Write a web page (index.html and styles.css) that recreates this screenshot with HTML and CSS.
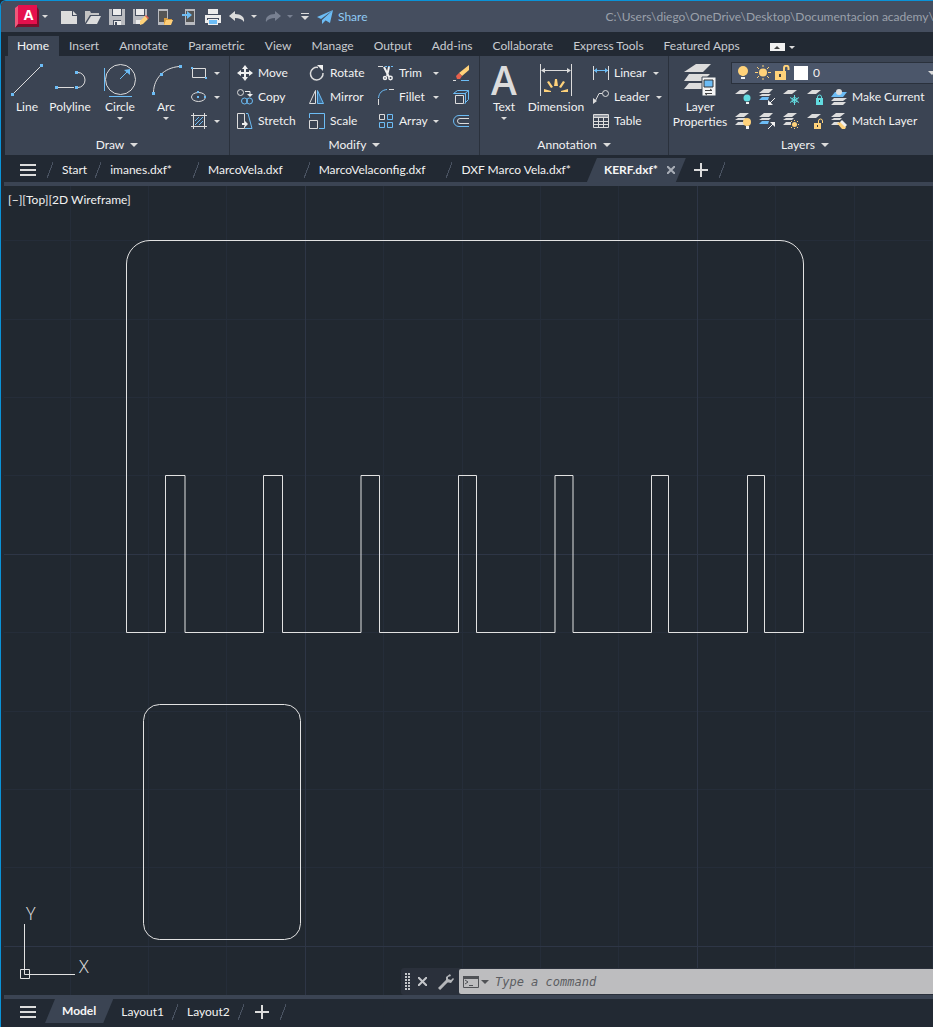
FILE: index.html
```html
<!DOCTYPE html>
<html lang="en">
<head>
    <meta charset="UTF-8">
    <meta name="viewport" content="width=device-width, initial-scale=1.0">
    <title>KERF.dxf</title>
    <link rel="stylesheet" href="styles.css">
</head>
<body>
    <div class="app">
        <header class="titlebar">
            <button class="logo" aria-label="Application menu">
                <svg width="24" height="24" viewBox="0 0 24 24"><path d="M4 2h18l2 3v17H7z" fill="#7d0d2b"/><path d="M0 3l4-3v19l-4 4z" fill="#f0587a"/><path d="M3 0h19v19H3z" fill="#e5104d"/><path d="M0 23l3-4h19v3H3z" fill="#7d0d2b"/></svg>
                <span>A</span>
            </button>
            <i class="caret"></i>
            <nav class="quick">
                <button aria-label="New"><svg width="16" height="16"><path d="M0 2h11v5h5v8H0z" fill="#dcdcdc"/><path d="M12 2l4 4h-4z" fill="#dcdcdc"/></svg></button>
                <button aria-label="Open"><svg width="16" height="16"><path d="M0 14V2h5l1 2h8v2H5z" fill="#c4c4c4"/><path d="M6 7h10l-4 8H1z" fill="#dcdcdc"/></svg></button>
                <button aria-label="Save"><svg width="16" height="16"><path d="M0 0h16v16H0z" fill="#b9bbc0"/><path d="M3 0h10v7H3zM4 11h8v5H4z" fill="#454e5f"/><path d="M4 0h8v6H4zM5 12h7v4H5z" fill="#ececec"/><path d="M6 13h2v3H6z" fill="#454e5f"/></svg></button>
                <button aria-label="Save as"><svg width="16" height="16"><path d="M0 0h14v9l-6 6H0z" fill="#b9bbc0"/><path d="M2 0h10v7H2z" fill="#454e5f"/><path d="M3 0h8v6H3zM3 11h5v4H3z" fill="#ececec"/><path d="M7 12l5-5 3 3-5 5-3 1z" fill="#ffd27a"/><path d="M12 7l1-1 3 3-1 1z" fill="#e8604c"/></svg></button>
                <button aria-label="Open from mobile"><svg width="16" height="16"><path d="M1 0h10v16H1z" fill="#b9bbc0"/><path d="M2 2h8v11H2z" fill="#555"/><path d="M7 9h3l1 1h4v2l-2 4H7z" fill="#d99c3c"/><path d="M9 11h7l-2 5H7z" fill="#ffcf78"/></svg></button>
                <button aria-label="Save to mobile"><svg width="16" height="16"><path d="M4 0h10v16H4z" fill="#b9bbc0"/><path d="M5 2h8v11H5z" fill="#555"/><path d="M1 5h5V2l5 4-5 4V7H1z" fill="#6cbcf5"/></svg></button>
                <button aria-label="Plot"><svg width="16" height="16"><path d="M3 0h10v5H3zM0 6h16v8H0z" fill="#ececec"/><path d="M2 9h12v2H2z" fill="#454e5f"/><path d="M3 10h10v6H3z" fill="#ececec"/><path d="M4 11h8v4H4z" fill="#6cbcf5"/></svg></button>
                <button aria-label="Undo"><svg width="16" height="16"><path d="M0 7l6-5v3c6 0 10 3 9 8-2-3-5-4-9-4v3z" fill="#dcdcdc"/></svg></button>
                <i class="caret"></i>
                <button aria-label="Redo"><svg width="16" height="16"><path d="M16 7l-6-5v3C4 5 0 8 1 13c2-3 5-4 9-4v3z" fill="#788091"/></svg></button>
                <i class="caret dim"></i>
                <button aria-label="Customize"><svg width="8" height="8"><path d="M0 0h8v1H0zM0 3h8l-4 4z" fill="#dcdcdc"/></svg></button>
            </nav>
            <a class="share" href="#">
                <svg width="16" height="16"><path d="M16 1L0 8l4 2zM16 1L5 11v4l3-3zM16 1L8 11l5 3z" fill="#6cbcf5"/></svg>
                Share
            </a>
            <span class="path">C:\Users\diego\OneDrive\Desktop\Documentacion academy\V</span>
        </header>

        <nav class="tabs">
            <button class="tab active">Home</button>
            <button class="tab">Insert</button>
            <button class="tab">Annotate</button>
            <button class="tab">Parametric</button>
            <button class="tab">View</button>
            <button class="tab">Manage</button>
            <button class="tab">Output</button>
            <button class="tab">Add-ins</button>
            <button class="tab">Collaborate</button>
            <button class="tab">Express Tools</button>
            <button class="tab">Featured Apps</button>
            <button class="minimize" aria-label="Minimize ribbon"><i class="caret-up"></i></button>
            <i class="caret"></i>
        </nav>

        <div class="ribbon">
            <!-- Draw -->
            <section class="panel draw">
                <div class="panel-body">
                    <button class="big line">
                        <svg width="34" height="34"><path d="M4 30L30 4" stroke="#dcdcdc" fill="none"/><path d="M1 30h3v3H1zM30 1h3v3h-3z" fill="#6cbcf5"/></svg>
                        Line
                    </button>
                    <button class="big polyline">
                        <svg width="34" height="34"><path d="M4 24.500h17M23 9.500h2a7 7.500 0 0 1 0 15h-1" stroke="#dcdcdc" fill="none"/><path d="M2 23h3v3H2zM22 23h3v3h-3zM22 8h3v3h-3z" fill="#6cbcf5"/></svg>
                        Polyline
                    </button>
                    <button class="big circle">
                        <svg width="34" height="34"><circle cx="17.500" cy="16.500" r="15" stroke="#dcdcdc" fill="none"/><path d="M1.500 5v23M6 33.500h23M17 16l8-8" stroke="#6cbcf5" fill="none"/><path d="M27 6v6l-6-5z" fill="#6cbcf5"/></svg>
                        Circle
                        <i class="caret"></i>
                    </button>
                    <button class="big arc">
                        <svg width="34" height="34"><path d="M4.500 29C5 15 15 5 30 3.500" stroke="#dcdcdc" fill="none"/><path d="M3 29h3v3H3zM11 10h3v3h-3zM30 2h3v3h-3z" fill="#6cbcf5"/></svg>
                        Arc
                        <i class="caret"></i>
                    </button>
                    <div class="small-list">
                        <button class="small" aria-label="Rectangle"><svg width="16" height="16"><path d="M1.500 3.500h13v9h-13z" stroke="#dcdcdc" fill="none"/><path d="M0 2h2v2H0zM14 12h2v2h-2z" fill="#6cbcf5"/></svg><i class="caret"></i></button>
                        <button class="small" aria-label="Ellipse"><svg width="16" height="16"><ellipse cx="7.500" cy="8" rx="7" ry="4.500" stroke="#dcdcdc" fill="none"/><path d="M6 7h2v2H6zM6 2h2v2H6zM13 7h2v2h-2z" fill="#6cbcf5"/></svg><i class="caret"></i></button>
                        <button class="small" aria-label="Hatch"><svg width="16" height="16"><path d="M2.500 0v16M13.500 0v16M0 2.500h16M0 13.500h16" stroke="#dcdcdc" fill="none"/><path d="M4 8l4-4M4 12l8-8M8 12l4-4" stroke="#6cbcf5" fill="none"/></svg><i class="caret"></i></button>
                    </div>
                </div>
                <button class="panel-title">Draw <i class="caret wide"></i></button>
            </section>

            <!-- Modify -->
            <section class="panel modify">
                <div class="panel-body">
                    <div class="small-list">
                        <button class="small"><svg width="16" height="16"><path d="M8 2v12M2 8h12" stroke="#f0f0f0" stroke-width="2"/><path d="M8 0l3 4H5zM8 16l3-4H5zM0 8l4-3v6zM16 8l-4-3v6z" fill="#f0f0f0"/></svg>Move</button>
                        <button class="small"><svg width="16" height="16"><g fill="none"><circle cx="3.500" cy="3.500" r="3" stroke="#dcdcdc"/><path d="M8 2.500h5v4" stroke="#f0f0f0"/><circle cx="7.500" cy="12" r="3" stroke="#6cbcf5"/><circle cx="12.500" cy="12" r="3" stroke="#6cbcf5"/></g><path d="M10 5h6l-3 3z" fill="#f0f0f0"/></svg>Copy</button>
                        <button class="small"><svg width="16" height="16"><path d="M7.500 10V.5h-7v15h7v-3" stroke="#dcdcdc" fill="none"/><path d="M9 .5h2l4 15H8" stroke="#6cbcf5" fill="none"/><path d="M5 10h3V8l3 3-3 3v-2H5z" fill="#f0f0f0"/></svg>Stretch</button>
                    </div>
                    <div class="small-list">
                        <button class="small"><svg width="16" height="16"><path d="M9 2.500A6.300 6.300 0 1 0 14 8" stroke="#dcdcdc" stroke-width="1.500" fill="none"/><path d="M8 0h6v6z" fill="#f0f0f0"/></svg>Rotate</button>
                        <button class="small"><svg width="16" height="16"><path d="M6.500 1.500v13h-6z" stroke="#dcdcdc" fill="none"/><path d="M8.500 1.500v13h6z" stroke="#6cbcf5" fill="#3d6d97"/></svg>Mirror</button>
                        <button class="small"><svg width="16" height="16"><path d="M.5 5V.5h15v15H10" stroke="#6cbcf5" fill="none"/><path d="M.5 7.500h8v8h-8z" stroke="#dcdcdc" fill="none"/></svg>Scale</button>
                    </div>
                    <div class="small-list carets">
                        <button class="small"><svg width="16" height="16"><path d="M0 1.500h5" stroke="#dcdcdc"/><path d="M7 1.500h9" stroke="#6cbcf5" stroke-dasharray="2 1"/><path d="M6 2l5 10M11 2l-2 9" stroke="#f0f0f0" stroke-width="2" fill="none"/><g stroke="#f0f0f0" stroke-width="1.500" fill="none"><circle cx="7" cy="13" r="1.500"/><circle cx="12.500" cy="13" r="1.700"/></g></svg>Trim<i class="caret"></i></button>
                        <button class="small"><svg width="16" height="16"><path d="M.5 16v-6" stroke="#dcdcdc"/><path d="M.5 9C1 4 4 1 9 .5" stroke="#6cbcf5" fill="none"/><path d="M11 .5h5" stroke="#dcdcdc"/></svg>Fillet<i class="caret"></i></button>
                        <button class="small"><svg width="16" height="16"><path d="M1.500 1.500h5v5h-5z" stroke="#dcdcdc" fill="none"/><path d="M9.500 1.500h5v5h-5zM1.500 9.500h5v5h-5zM9.500 9.500h5v5h-5z" stroke="#6cbcf5" fill="none"/></svg>Array<i class="caret"></i></button>
                    </div>
                    <div class="small-list">
                        <button class="small" aria-label="Erase"><svg width="16" height="16"><path d="M0 15.500h3" stroke="#dcdcdc"/><path d="M8 15.500h8" stroke="#6cbcf5"/><path d="M16 0v5l-7 6-3-3z" fill="#ffd27a"/><path d="M6 8l3 3-2 3H4l-1-3z" fill="#e8604c"/></svg></button>
                        <button class="small" aria-label="Explode"><svg width="16" height="16"><path d="M.5 4.500l4-3h11v9l-4 4M11.500 5l4-3.500M.5 4.500h12v10" stroke="#6cbcf5" fill="none"/><path d="M2.500 6.500h8v8h-8z" stroke="#dcdcdc" fill="none"/></svg></button>
                        <button class="small" aria-label="Offset"><svg width="16" height="16"><path d="M16 2.500H6a5.500 5.500 0 0 0 0 11h10" stroke="#6cbcf5" fill="none"/><path d="M16 5.500H7a2.500 2.500 0 0 0 0 5h9" stroke="#dcdcdc" fill="none"/></svg></button>
                    </div>
                </div>
                <button class="panel-title">Modify <i class="caret wide"></i></button>
            </section>

            <!-- Annotation -->
            <section class="panel annotation">
                <div class="panel-body">
                    <button class="big text"><span class="big-letter">A</span>Text<i class="caret"></i></button>
                    <button class="big dimension">
                        <svg width="34" height="34"><path d="M1.500 1v32M32.500 1v32M3 7.500h28" stroke="#dcdcdc"/><path d="M2 7.500L6 5v5zM32 7.500L28 5v5z" fill="#dcdcdc"/><path d="M16 16h2l1 7h-4zM8 19l2-1 4 6-2 1zM26 19l-2-1-4 6 2 1zM5 26l7 2v1H5zM29 26l-7 2v1h7z" fill="#ffd27a"/></svg>
                        Dimension
                    </button>
                    <div class="small-list">
                        <button class="small"><svg width="16" height="16"><path d="M.5 1v14M15.500 1v14" stroke="#dcdcdc"/><path d="M1 5.500h14" stroke="#6cbcf5"/><path d="M1 5.500L4 3v5zM15 5.500L12 3v5z" fill="#6cbcf5"/></svg>Linear<i class="caret"></i></button>
                        <button class="small"><svg width="16" height="16"><circle cx="12.500" cy="4.500" r="3" stroke="#dcdcdc" fill="none"/><path d="M9 4.500H6l-4 8" stroke="#dcdcdc" fill="none"/><path d="M0 15V9l4 3z" fill="#dcdcdc"/></svg>Leader<i class="caret"></i></button>
                        <button class="small"><svg width="16" height="16"><path d="M.5 1.500h15v13H.5zM0 4.500h16M0 8.500h16M0 11.500h16M5.500 4v10M10.500 4v10" stroke="#dcdcdc" fill="none"/><path d="M1 2h14v2H1z" fill="#9499a2"/></svg>Table</button>
                    </div>
                </div>
                <button class="panel-title">Annotation <i class="caret wide"></i></button>
            </section>

            <!-- Layers -->
            <section class="panel layers">
                <div class="panel-body">
                    <button class="big properties">
                        <svg width="34" height="34"><path d="M13 1h15l-8 8H1zM6 11h21l-7 7H1zM6 20h16v6H1z" fill="#dcdcdc"/><path d="M19 14h14v19H19z" fill="#f4f4f4" stroke="#3b4453"/><path d="M21 17h9v7h-9z" fill="#6cbcf5" stroke="#333"/><path d="M22 27.500h7M22 30.500h7M27 26l2 1.500M24 32l-2-1.500" stroke="#444"/></svg>
                        Layer<br>Properties
                    </button>
                    <div class="layer-tools">
                        <div class="combo">
                            <svg width="16" height="16"><circle cx="7" cy="6" r="5" fill="#ffd27a"/><path d="M5 9h4l-1 2H6z" fill="#ffd27a"/><path d="M5 12h4v2H5z" fill="#f4f4f4"/></svg>
                            <svg width="16" height="16"><circle cx="8" cy="7.500" r="4" fill="#ffd27a"/><path d="M8 0v2M8 13v2M0 7.500h3M13 7.500h3M2 2l2 2M14 2l-2 2M2 13l2-2M14 13l-2-2" stroke="#ffd27a"/></svg>
                            <svg width="16" height="16"><path d="M1 6h11v9H1z" fill="#ffd27a"/><path d="M10 6V3a2.200 2.200 0 0 1 4.500 0v2" stroke="#ffd27a" stroke-width="2" fill="none"/><path d="M5 9h2v3H5z" fill="#444"/></svg>
                            <span class="swatch"></span>
                            <select aria-label="Layer"><option>0</option></select>
                            <i class="caret wide"></i>
                        </div>
                        <div class="layer-row">
                            <button aria-label="Off"><svg width="16" height="16"><path d="M5 1h9l-5 4H0z" fill="#dcdcdc"/><circle cx="12" cy="9" r="3.500" fill="#62dbe0"/><path d="M11 13h3v2h-3z" fill="#f0f0f0"/></svg></button>
                            <button aria-label="Isolate"><svg width="16" height="16"><path d="M5 0h9l-4 4H0zM3 5h9l-2 2H0z" fill="#dcdcdc"/><path d="M3 8h7l-1 3H0z" fill="#6cbcf5"/><path d="M16 9l-5 5" stroke="#f0f0f0"/><path d="M9 16v-5l5 5z" fill="#f0f0f0"/></svg></button>
                            <button aria-label="Freeze"><svg width="16" height="16"><path d="M5 1h9l-5 4H0z" fill="#dcdcdc"/><g stroke="#62dbe0" fill="none"><circle cx="11.500" cy="11" r="2.500"/><path d="M11.500 6v10M7 8.500l9 5M16 8.500l-9 5"/></g></svg></button>
                            <button aria-label="Lock"><svg width="16" height="16"><path d="M5 1h9l-5 4H0z" fill="#dcdcdc"/><path d="M9 9h7v7H9z" fill="#62dbe0"/><path d="M10.500 9V8a2 2 0 0 1 4 0v1" stroke="#62dbe0" fill="none"/><path d="M12 11h1v2h-1z" fill="#333"/></svg></button>
                            <button class="wide-tool"><svg width="16" height="16"><path d="M4 3h12l-4 5H0z" fill="#6cbcf5"/><circle cx="8" cy="3" r="3" fill="#dcdcdc"/><path d="M3 9h13l-4 3H0zM3 13h12l-3 3H0z" fill="#dcdcdc"/></svg>Make Current</button>
                        </div>
                        <div class="layer-row">
                            <button aria-label="Turn on"><svg width="16" height="16"><path d="M5 0h9l-5 4H0zM3 5h8l-2 2H0zM3 9h6v3H0z" fill="#dcdcdc"/><circle cx="12" cy="9" r="4" fill="#ffd27a"/><path d="M11 13h3v3h-3z" fill="#f0f0f0"/></svg></button>
                            <button aria-label="Unisolate"><svg width="16" height="16"><path d="M5 0h9l-4 4H0zM3 5h9l-2 2H0z" fill="#dcdcdc"/><path d="M3 8h7l-1 3H0z" fill="#6cbcf5"/><path d="M9 16l5-5" stroke="#f0f0f0"/><path d="M16 9v5l-5-5z" fill="#f0f0f0"/></svg></button>
                            <button aria-label="Thaw"><svg width="16" height="16"><path d="M5 0h9l-5 4H0zM3 5h8l-2 2H0zM3 9h5v3H0z" fill="#dcdcdc"/><circle cx="11.500" cy="11.500" r="2.500" fill="#ffd27a"/><path d="M11.500 7v1M11.500 15v1M7 11.500h1M15 11.500h1M8 8l1 1M15 8l-1 1M8 15l1-1M15 15l-1-1" stroke="#ffd27a"/></svg></button>
                            <button aria-label="Unlock"><svg width="16" height="16"><path d="M5 1h9l-5 4H0z" fill="#dcdcdc"/><path d="M7 10h7v6H7z" fill="#ffd27a"/><path d="M11.500 10V8a2 2 0 0 1 4 0v2" stroke="#ffd27a" fill="none"/><path d="M10 12h1v2h-1z" fill="#333"/></svg></button>
                            <button class="wide-tool"><svg width="16" height="16"><path d="M5 0h9l-5 4H0zM3 5h8l-2 2H0zM3 9h5v3H0z" fill="#dcdcdc"/><path d="M6 10l4-1 5 5-1 2h-3z" fill="#ffd27a"/><path d="M9 9l2-2 5 5-2 2z" fill="#f0f0f0"/></svg>Match Layer</button>
                        </div>
                    </div>
                </div>
                <button class="panel-title">Layers <i class="caret wide"></i></button>
            </section>
        </div>

        <nav class="files">
            <button class="menu" aria-label="Menu"><i></i><i></i><i></i></button>
            <button class="file start">Start</button>
            <button class="file">imanes.dxf*</button>
            <button class="file">MarcoVela.dxf</button>
            <button class="file">MarcoVelaconfig.dxf</button>
            <button class="file">DXF Marco Vela.dxf*</button>
            <button class="file-active">KERF.dxf* <svg width="8" height="8"><path d="M0 0l8 8M8 0L0 8" stroke="#a9aeb7" stroke-width="2"/></svg></button>
            <button class="plus" aria-label="New drawing"></button>
            <span class="slash"></span>
        </nav>

        <main class="canvas">
            <svg class="drawing" width="100%" height="100%">
                <defs>
                    <pattern id="grid" x="305" y="554" width="392" height="392" patternUnits="userSpaceOnUse">
                        <path d="M78.500 0v392M157.500 0v392M235.500 0v392M313.500 0v392M0 78.500h392M0 157.500h392M0 235.500h392M0 313.500h392" stroke="#252d39"/>
                        <path d="M.5 0v392M0 .5h392" stroke="#2e3646"/>
                    </pattern>
                </defs>
                <g transform="translate(-4 -186)">
                    <rect width="4000" height="4000" fill="url(#grid)"/>
                    <g fill="none" stroke="#e2e2e2">
                        <path d="M126.500 632.500V264a23.500 23.500 0 0 1 23.500-23.500H780a23.500 23.500 0 0 1 23.500 23.500V632.500H764.500V475.500H747.500V632.500H668.500V475.500H651.500V632.500H573V475.500H555V632.500H476.500V475.500H458.500V632.500H379.500V475.500H361V632.500H282.500V475.500H263.500V632.500H185V475.500H165.500V632.500z"/>
                        <rect x="143.500" y="704.500" width="157" height="235" rx="16"/>
                        <path d="M24.500 924v50.500H75M20.500 969.500h9v9h-9z"/>
                    </g>
                    <text class="axis" x="26" y="920">Y</text>
                    <text class="axis" x="79" y="973">X</text>
                </g>
            </svg>
            <span class="view-label">[−][Top][2D Wireframe]</span>
            <div class="command">
                <svg class="grip" width="5" height="18"><path d="M1 0v18M4 0v18" stroke="#c4c6ca" stroke-width="2" stroke-dasharray="2 1"/></svg>
                <button aria-label="Close"><svg width="9" height="9"><path d="M0 0l9 9M9 0L0 9" stroke="#c4c6ca" stroke-width="2"/></svg></button>
                <button aria-label="Settings"><svg width="16" height="16"><path d="M1 15l8-8" stroke="#b4b6ba" stroke-width="3"/><path d="M12 0L8 3v5l5 1 3-4-1-1-2 2-3-1V3l3-1z" fill="#b4b6ba"/></svg></button>
                <div class="prompt">
                    <svg width="16" height="12"><path d="M.5.5h15v11H.5z" stroke="#505256" fill="none"/><path d="M0 0h16v3H0z" fill="#505256"/><path d="M2 4l3 2-3 2M6 9.500h4" stroke="#505256" fill="none"/></svg>
                    <i class="caret wide dark"></i>
                    <input type="text" placeholder="Type a command" aria-label="Command">
                </div>
            </div>
        </main>

        <nav class="files layouts">
            <button class="menu" aria-label="Layout menu"><i></i><i></i><i></i></button>
            <button class="file-active">Model</button>
            <button class="file">Layout1</button>
            <span class="slash"></span>
            <button class="file">Layout2</button>
            <span class="slash"></span>
            <button class="plus" aria-label="New layout"></button>
            <span class="slash"></span>
        </nav>
    </div>
</body>
</html>
```
FILE: styles.css
```css
* {
    box-sizing: border-box;
}
body {
    margin: 0;
    background: #222933;
    color: #f2f2f2;
    font: 12px/18px Lato, 'Open Sans', sans-serif;
    overflow-x: hidden;
}
button {
    flex: none;
    margin: 0;
    padding: 0;
    border: none;
    background: none;
    color: inherit;
    font: inherit;
    white-space: nowrap;
    cursor: pointer;
}
svg {
    display: block;
    flex: none;
}
.app {
    display: flex;
    flex-direction: column;
    min-height: 100vh;
    border-top: 1px solid #0a93d8;
    border-left: 1px solid #0a93d8;
    border-top-left-radius: 6px;
    overflow: hidden;
}

/* little arrows */
.caret {
    flex: none;
    width: 0;
    height: 0;
    border: 3px solid transparent;
    border-top-color: #dcdcdc;
    border-bottom: none;
}
.caret.wide {
    border-width: 4px 4px 0;
}
.caret.dim {
    border-top-color: #788091;
}
.caret.dark {
    border-top-color: #505256;
}
.caret-up {
    display: block;
    border: 3px solid transparent;
    border-bottom-color: #444;
    border-top: none;
}

/* title bar */
.titlebar {
    display: flex;
    align-items: center;
    height: 31px;
    padding-left: 14px;
    background: #454e5f;
    overflow: hidden;
}
.logo {
    position: relative;
    margin-right: 3px;
}
.logo span {
    position: absolute;
    inset: 0 0 4px 3px;
    color: #fff;
    font: bold 14px/20px 'Open Sans', sans-serif;
}
.quick {
    display: flex;
    align-items: center;
    gap: 8px;
    margin-left: 13px;
}
.quick .caret {
    margin-left: -2px;
}
.share {
    display: flex;
    align-items: center;
    gap: 5px;
    margin-left: 8px;
    color: #8fcbf5;
    text-decoration: none;
}
.path {
    margin-left: 238px;
    color: #9ba1ab;
    white-space: nowrap;
}

/* ribbon tabs */
.tabs {
    display: flex;
    align-items: center;
    height: 24px;
    padding-left: 7px;
    color: #c9ccd1;
}
.tab {
    height: 20px;
    margin-top: 4px;
    padding: 0 10px;
}
.tab.active {
    padding-left: 9px;
    background: #3b4453;
    color: #f6f6f6;
}
.minimize {
    display: flex;
    align-items: center;
    justify-content: center;
    width: 15px;
    height: 8px;
    margin: 6px 4px 0 20px;
    background: #f2f2f2;
}
.tabs > .caret {
    margin-top: 6px;
}

/* ribbon panels */
.ribbon {
    display: flex;
    height: 99px;
    margin-left: 4px;
    background: #3b4453;
}
.panel {
    display: flex;
    flex: none;
    flex-direction: column;
    border-right: 1px solid #2a313c;
}
.panel-body {
    display: flex;
    height: 80px;
    padding-top: 5px;
}
.panel-title {
    display: flex;
    align-items: center;
    justify-content: center;
    gap: 6px;
}
.draw {
    width: 225px;
}
.modify {
    width: 250px;
}
.annotation {
    width: 189px;
}
.layers {
    flex: 1;
    min-width: 264px;
    border-right: none;
}
.layers .panel-title {
    width: 272px;
}
.big {
    display: flex;
    flex-direction: column;
    align-items: center;
    padding-top: 2px;
    line-height: 16px;
}
.big svg {
    margin-bottom: 2px;
}
.big .caret {
    margin-top: 2px;
}
.line {
    width: 44px;
}
.polyline {
    width: 42px;
}
.circle {
    width: 58px;
}
.arc {
    width: 34px;
}
.text {
    width: 48px;
}
.dimension {
    width: 56px;
    margin-right: 9px;
}
.properties {
    width: 62px;
    line-height: 15px;
}
.big-letter {
    height: 36px;
    color: #dcdcdc;
    font: 600 39px/33px 'Open Sans', sans-serif;
}
.small-list {
    display: flex;
    flex: none;
    flex-direction: column;
}
.small {
    display: flex;
    align-items: center;
    gap: 5px;
    height: 24px;
}
.small .caret {
    margin-left: 2px;
}
.draw .small-list {
    margin-left: 8px;
}
.modify .panel-body {
    padding-left: 7px;
}
.modify .small-list {
    width: 72px;
}
.modify .small-list:nth-child(2) {
    width: 69px;
}
.modify .carets {
    width: 61px;
    margin-right: 14px;
}
.modify .carets .caret {
    margin-left: auto;
}

/* layer tools */
.combo {
    display: flex;
    align-items: center;
    gap: 3px;
    width: 206px;
    height: 22px;
    margin: 1px 0;
    padding: 0 0 0 4px;
    border: 1px solid #2a313c;
    background: #4b566a;
}
.swatch {
    width: 14px;
    height: 14px;
    margin-left: 1px;
    background: #fff;
}
.combo select {
    flex: 1;
    padding: 0 0 0 2px;
    border: none;
    background: none;
    color: inherit;
    font: inherit;
    appearance: none;
}
.layer-row {
    display: flex;
    align-items: center;
    gap: 8px;
    height: 24px;
    padding-left: 4px;
}
.wide-tool {
    display: flex;
    align-items: center;
    gap: 5px;
}

/* drawing and layout tabs */
.files {
    display: flex;
    align-items: center;
    height: 31px;
    margin-left: 3px;
    padding: 2px 0 0 16px;
    border-bottom: 4px solid #3b4453;
}
.menu {
    display: flex;
    flex-direction: column;
    gap: 3px;
    width: 16px;
    margin-right: 11px;
}
.menu i {
    height: 2px;
    background: #dcdcdc;
}
.file {
    display: flex;
    align-items: center;
    padding-right: 21px;
}
.file.start {
    padding-right: 8px;
}
.files:not(.layouts) .file::before,
.slash {
    content: '';
    width: 6px;
    height: 16px;
    margin-right: 9px;
    background: linear-gradient(111deg, transparent 46%, #4a5362 47%, #4a5362 55%, transparent 56%);
}
.file-active {
    display: flex;
    align-items: center;
    gap: 9px;
    height: 24px;
    margin: 1px 0 0 -5px;
    padding: 0 11px 0 17px;
    background: #3b4453;
    clip-path: polygon(10px 0, 100% 0, calc(100% - 10px) 100%, 0 100%);
    color: #f6f6f6;
    font-weight: bold;
}
.plus {
    width: 14px;
    height: 14px;
    margin: 0 11px 0 8px;
    background: linear-gradient(#dcdcdc, #dcdcdc) center / 14px 2px no-repeat, linear-gradient(#dcdcdc, #dcdcdc) center / 2px 14px no-repeat;
}

/* model space */
.canvas {
    position: relative;
    flex: 1;
    min-height: 400px;
    margin-left: 3px;
    background: #212830;
}
.drawing {
    position: absolute;
    inset: 0;
}
.axis {
    fill: #e2e2e2;
    font: 300 18px 'Open Sans', sans-serif;
}
.view-label {
    position: absolute;
    top: 5px;
    left: 4px;
}
.command {
    position: absolute;
    right: 0;
    bottom: 0;
    left: 397px;
    display: flex;
    align-items: center;
    height: 27px;
    padding-left: 4px;
    border-radius: 3px;
    background: #2a303b;
}
.command button {
    margin-left: 8px;
}
.command button + button {
    margin-left: 11px;
}
.prompt {
    display: flex;
    flex: 1;
    align-items: center;
    height: 25px;
    margin-left: 5px;
    padding-left: 4px;
    border-radius: 2px 0 0 2px;
    background: #bdbdbf;
}
.prompt .caret {
    margin-left: 2px;
}
.prompt input {
    flex: 1;
    min-width: 0;
    margin-left: 6px;
    padding: 0;
    border: none;
    outline: none;
    background: none;
    color: #333;
    font: italic 12px 'DejaVu Sans Mono', monospace;
}
.prompt input::placeholder {
    color: #5c5e62;
    opacity: 1;
}

/* layout tabs */
.layouts {
    height: 32px;
    padding: 0 0 3px 16px;
    border-top: 4px solid #3b4453;
    border-bottom: none;
}
.layouts .menu {
    margin-right: 9px;
}
.layouts .file-active {
    margin: 0 8px 1px 0;
    padding-right: 17px;
}
.layouts .file {
    padding-right: 8px;
}
.layouts .plus {
    margin-left: 2px;
}
```
